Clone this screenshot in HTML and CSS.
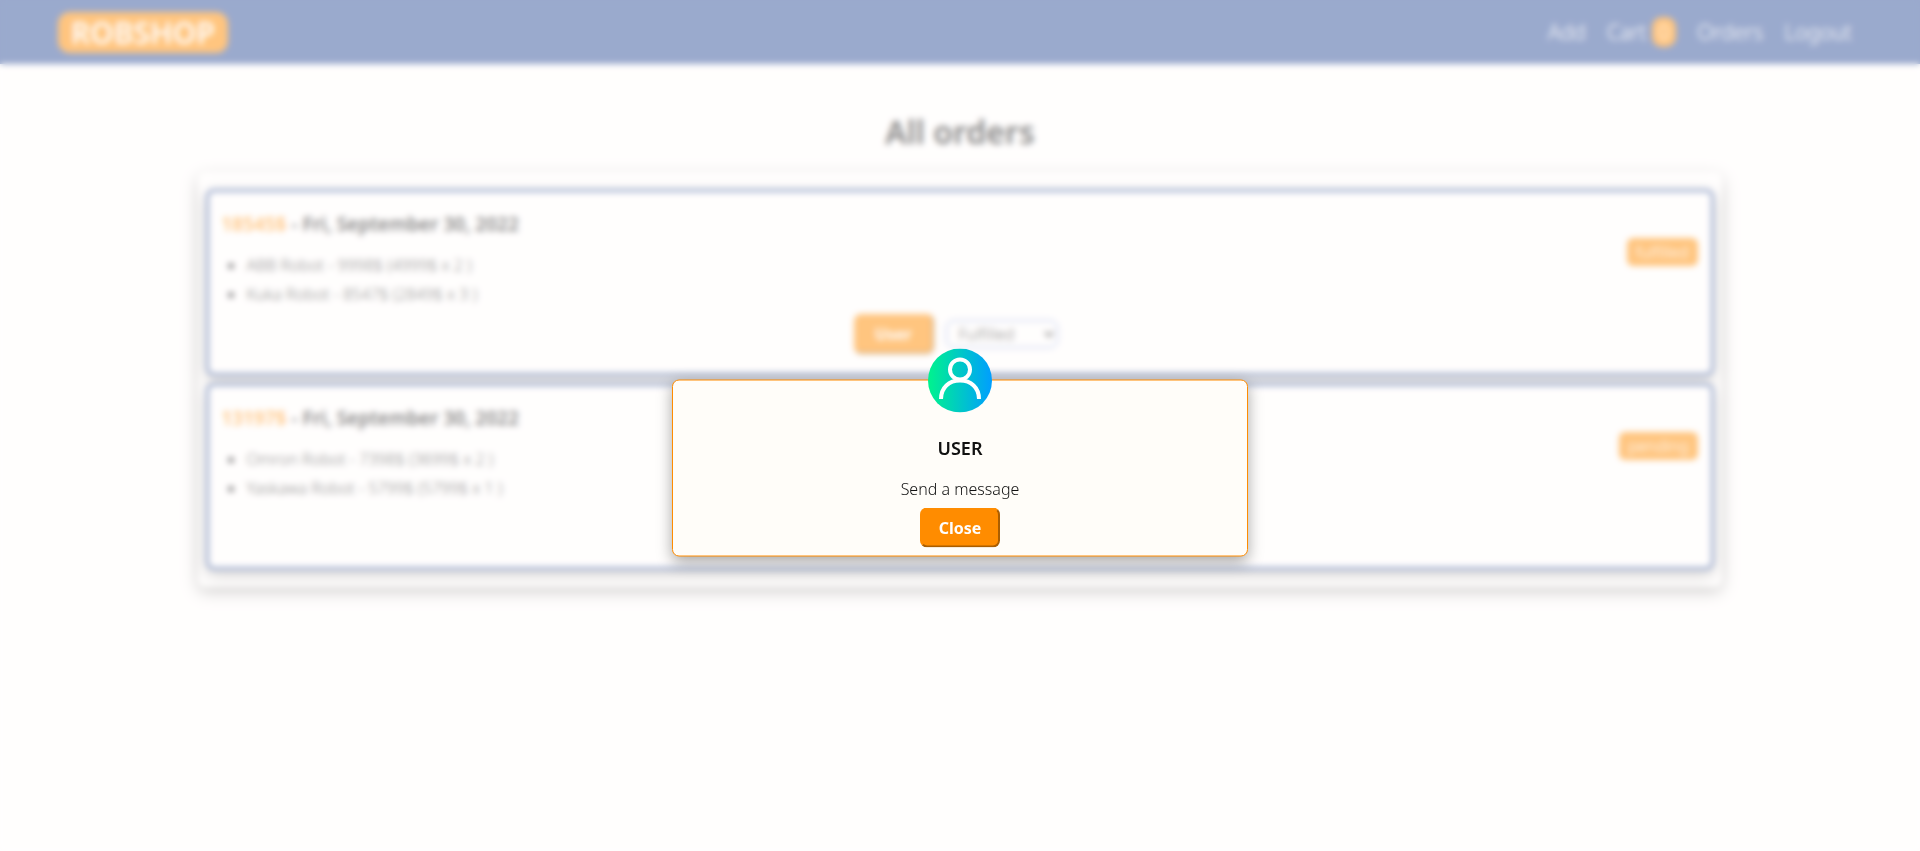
FILE: index.html
```html
<!DOCTYPE html>
<html lang="en">
<head>
<meta charset="utf-8">
<title>Robshop - All orders</title>
<link rel="stylesheet" href="styles.css">
</head>
<body>
<header class="navbar">
  <a class="brand" href="#">ROBSHOP</a>
  <nav class="nav-links">
    <a href="#">Add</a>
    <a href="#">Cart <span class="cart-count">0</span></a>
    <a href="#">Orders</a>
    <a href="#">Logout</a>
  </nav>
</header>
<main class="page">
  <h1 class="page-title">All orders</h1>
  <section class="orders">
    <article class="order">
      <div class="order-body">
        <div>
          <h2 class="order-title"><span class="price">18545$</span> - Fri, September 30, 2022</h2>
          <ul class="items">
            <li>ABB Robot - 9998$ (4999$ x 2 )</li>
            <li>Kuka Robot - 8547$ (2849$ x 3 )</li>
          </ul>
        </div>
        <span class="status">fulfilled</span>
      </div>
      <div class="order-actions">
        <button class="btn" type="button">User</button>
        <select class="status-select" aria-label="Order status">
          <option>Fulfilled</option>
          <option>Pending</option>
        </select>
      </div>
    </article>
    <article class="order">
      <div class="order-body">
        <div>
          <h2 class="order-title"><span class="price">13197$</span> - Fri, September 30, 2022</h2>
          <ul class="items">
            <li>Omron Robot - 7398$ (3699$ x 2 )</li>
            <li>Yaskawa Robot - 5799$ (5799$ x 1 )</li>
          </ul>
        </div>
        <span class="status">pending</span>
      </div>
    </article>
  </section>
</main>
<div class="backdrop">
  <div class="modal" role="dialog" aria-modal="true" aria-labelledby="modal-title">
    <svg class="avatar" viewBox="0 0 64 64" aria-hidden="true">
      <defs>
        <linearGradient id="avatar-fill" x1="0" x2="1" y1="0" y2="0">
          <stop offset="0" stop-color="#00f38d"/>
          <stop offset="1" stop-color="#009eff"/>
        </linearGradient>
      </defs>
      <circle cx="32" cy="32" r="32" fill="url(#avatar-fill)"/>
      <g fill="none" stroke="#fff" stroke-width="4">
        <circle cx="32" cy="21" r="10"/>
        <path d="M13 50.500C13 39 21 32 32 32s19 7 19 18.500"/>
      </g>
    </svg>
    <h2 class="modal-title" id="modal-title">USER</h2>
    <p class="modal-text">Send a message</p>
    <button class="btn" type="button">Close</button>
  </div>
</div>
</body>
</html>
```
FILE: styles.css
```css
* {
  box-sizing: border-box;
}

body {
  margin: 0;
  background: #fffefd;
  color: #111;
  font-family: "Noto Sans", "Open Sans", sans-serif;
  font-size: 16px;
  font-weight: 300;
}

.navbar {
  display: flex;
  align-items: center;
  justify-content: space-between;
  height: 64px;
  padding: 0 68px 0 58px;
  background: #35569d;
}

.brand {
  padding: 0 13px;
  border-radius: 12px;
  background: #ff8c00;
  color: #fffefd;
  font-size: 30px;
  font-weight: 600;
  line-height: 41px;
  text-decoration: none;
}

.nav-links {
  display: flex;
  gap: 21px;
}

.nav-links a {
  color: #fffefd;
  font-size: 21px;
  font-weight: 300;
  line-height: 30px;
  text-decoration: none;
}

.cart-count {
  display: inline-block;
  padding: 0 6px;
  border-radius: 10px;
  background: #ff8c00;
}

.page {
  padding: 48px 8px;
}

.page-title {
  margin: 0 0 20px;
  font-size: 32px;
  font-weight: 600;
  line-height: 40px;
  text-align: center;
}

.orders {
  display: flex;
  flex-direction: column;
  gap: 7px;
  width: 80%;
  margin: 0 auto;
  padding: 17px 8px;
  border-radius: 8px;
  box-shadow: 0 5px 15px rgba(0, 0, 0, 0.35);
}

.order {
  display: flex;
  flex-direction: column;
  min-height: 187px;
  padding: 16px 13px 8px 12px;
  border: 3px solid #35569d;
  border-radius: 8px;
  box-shadow: 0 5px 15px rgba(0, 0, 0, 0.35);
  background: #fffefd;
}

.order-body {
  display: flex;
  align-items: flex-start;
  justify-content: space-between;
}

.order-title {
  margin: 0;
  font-size: 19px;
  font-weight: 600;
  line-height: 32px;
}

.price {
  color: #ff8c00;
}

.items {
  margin: 11px 0 0;
  padding-left: 25px;
  line-height: 29px;
}

.status {
  margin-top: 30px;
  padding: 0 9px;
  border-radius: 6px;
  background: #ff8c00;
  color: #fffefd;
  font-weight: 300;
  line-height: 28px;
}

.order-actions {
  display: flex;
  align-items: center;
  justify-content: center;
  gap: 12px;
  margin-top: 5px;
  padding-right: 8px;
}

.btn {
  min-width: 80px;
  height: 40px;
  padding: 0 16px;
  border: 2px outset #ff8c00;
  border-top-color: #ff8c00;
  border-left-color: #ff8c00;
  border-radius: 7px;
  background: #ff8c00;
  color: #fffefd;
  font: inherit;
  font-weight: 700;
}

.status-select {
  width: 112px;
  height: 28px;
  padding: 0 8px;
  border: 1px solid #5f7fd0;
  border-radius: 8px;
  background: #fffefd;
  color: #111;
  font: inherit;
}

.backdrop {
  position: fixed;
  inset: 0;
  background: rgba(255, 254, 253, 0.5);
  backdrop-filter: blur(3px);
}

.modal {
  position: absolute;
  top: 55%;
  left: 50%;
  display: flex;
  flex-direction: column;
  align-items: center;
  width: 30%;
  padding: 39px 8px 8px;
  border: 1px solid #ff8c00;
  border-radius: 7px;
  background: #fffdf9;
  box-shadow: 0 5px 15px rgba(0, 0, 0, 0.35);
  transform: translate(-50%, -50%);
}

.avatar {
  position: absolute;
  top: -32px;
  width: 64px;
  height: 64px;
}

.modal-title {
  margin: 14px 0;
  font-size: 18px;
  font-weight: 600;
  line-height: 28px;
}

.modal-text {
  margin: 0 0 6px;
  line-height: 26px;
}
```
